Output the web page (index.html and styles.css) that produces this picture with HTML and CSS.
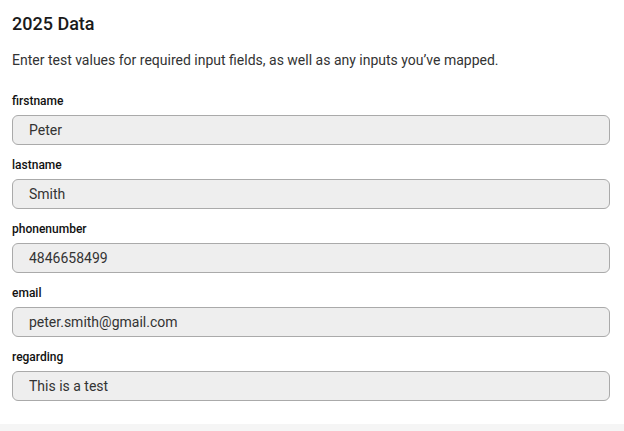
FILE: index.html
```html
<!DOCTYPE html>
<html lang="en">
<head>
    <meta charset="UTF-8">
    <title>2025 Data</title>
    <link rel="stylesheet" href="styles.css">
</head>
<body>
    <div class="panel">
        <h2 class="panel-title">2025 Data</h2>
        <p class="panel-intro">Enter test values for required input fields, as well as any inputs you’ve mapped.</p>

        <div class="fields">
            <div class="field">
                <label for="firstname">firstname</label>
                <input id="firstname" type="text" value="Peter" readonly>
            </div>
            <div class="field">
                <label for="lastname">lastname</label>
                <input id="lastname" type="text" value="Smith" readonly>
            </div>
            <div class="field">
                <label for="phonenumber">phonenumber</label>
                <input id="phonenumber" type="text" value="4846658499" readonly>
            </div>
            <div class="field">
                <label for="email">email</label>
                <input id="email" type="text" value="peter.smith@gmail.com" readonly>
            </div>
            <div class="field">
                <label for="regarding">regarding</label>
                <input id="regarding" type="text" value="This is a test" readonly>
            </div>
        </div>
    </div>
    <div class="footer-strip"></div>
</body>
</html>
```

FILE: styles.css
```css
body {
    font-family: Roboto, 'Liberation Sans', sans-serif;
    margin: 0;
    padding: 0;
    background-color: #ffffff;
    color: #222;
}

.panel {
    padding: 12px 14px 23px 12px;
}

.panel-title {
    font-size: 18px;
    font-weight: 500;
    line-height: 24px;
    margin: 0;
    color: #1a1a1a;
}

.panel-intro {
    font-size: 14px;
    line-height: 20px;
    margin: 14px 0 0;
    color: #333;
}

.fields {
    display: flex;
    flex-direction: column;
    gap: 12px;
    margin-top: 23px;
}

.field {
    display: flex;
    flex-direction: column;
    gap: 6px;
}

.field label {
    font-size: 12px;
    font-weight: 500;
    line-height: 16px;
    color: #111;
}

.field input {
    box-sizing: border-box;
    height: 30px;
    width: 100%;
    padding: 0 16px;
    font-family: inherit;
    font-size: 14px;
    color: #333;
    background-color: #eeeeee;
    border: 1px solid #aaaaaa;
    border-radius: 6px;
    outline: none;
}

.footer-strip {
    height: 20px;
    background-color: #f5f5f5;
}
```
